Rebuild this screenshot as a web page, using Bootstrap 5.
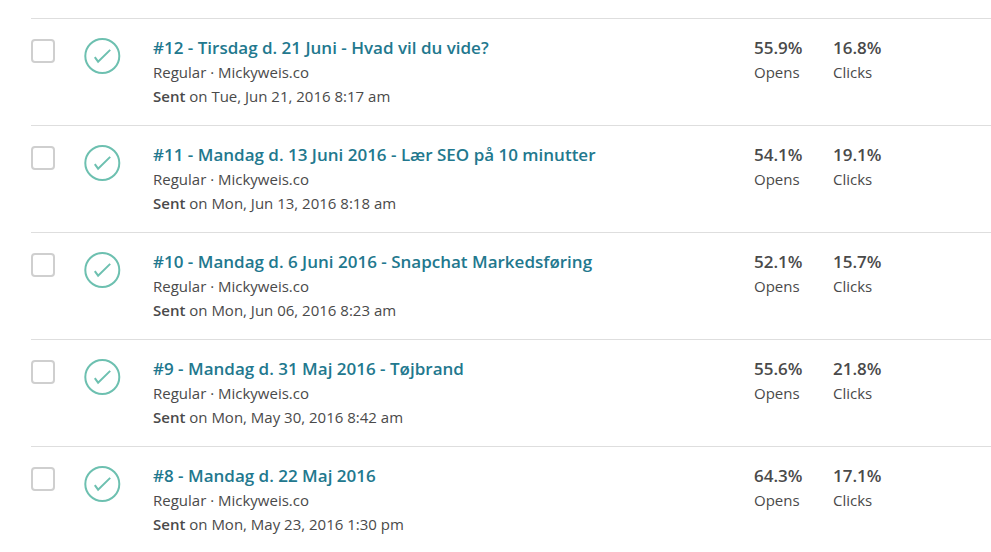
<!DOCTYPE html>
<html lang="da">
<head>
<meta charset="utf-8">
<meta name="viewport" content="width=device-width, initial-scale=1">
<title>Campaigns</title>
<link rel="stylesheet" href="https://cdn.jsdelivr.net/npm/bootstrap@5.3.0/dist/css/bootstrap.min.css">
<style>
body { font-family: "Open Sans", sans-serif; font-size: 15px; line-height: 24px; color: #4a4a4a; background: #fff; }
.campaign-list { padding: 18px 0 0 31px; }
.campaign { border-top: 1px solid #dedede; padding: 17px 0; }
.campaign .form-check-input { width: 24px; height: 24px; margin: 3px 28px 0 0; border: 2px solid #cfcfcf; border-radius: 4px; }
.status-icon { width: 38px; height: 38px; margin: 1px 32px 0 0; }
.campaign-title { font-size: 17px; font-weight: 600; color: #22788e; }
.campaign-title:hover { color: #174f5e; }
.campaign-text { font-size: 15px; }
.sent-label, .rate { font-weight: 600; }
.rate { font-size: 17px; }
.opens { width: 79px; }
.clicks { width: 158px; }
</style>
</head>
<body>
<svg class="d-none" xmlns="http://www.w3.org/2000/svg">
  <symbol id="sent" viewBox="0 0 38 38">
    <g fill="none" stroke="#6dc0b0" stroke-width="2"><circle cx="19.3" cy="19" r="17"/><path d="M11.8 20.2 15.1 24.7 27.2 12.9" stroke-linejoin="miter"/></g>
  </symbol>
</svg>
<main>
<ul class="campaign-list list-unstyled mb-0">
  <li class="campaign d-flex align-items-start">
    <input class="form-check-input flex-shrink-0" type="checkbox" aria-labelledby="c12">
    <svg class="status-icon flex-shrink-0" aria-hidden="true"><use href="#sent"/></svg>
    <div class="flex-grow-1">
      <div><a class="campaign-title text-decoration-none" id="c12" href="#">#12 - Tirsdag d. 21 Juni - Hvad vil du vide?</a></div>
      <div class="campaign-text">Regular · Mickyweis.co</div>
      <div class="campaign-text"><span class="sent-label">Sent</span> on Tue, Jun 21, 2016 8:17 am</div>
    </div>
    <div class="opens flex-shrink-0"><div class="rate">55.9%</div><div>Opens</div></div>
    <div class="clicks flex-shrink-0"><div class="rate">16.8%</div><div>Clicks</div></div>
  </li>
  <li class="campaign d-flex align-items-start">
    <input class="form-check-input flex-shrink-0" type="checkbox" aria-labelledby="c11">
    <svg class="status-icon flex-shrink-0" aria-hidden="true"><use href="#sent"/></svg>
    <div class="flex-grow-1">
      <div><a class="campaign-title text-decoration-none" id="c11" href="#">#11 - Mandag d. 13 Juni 2016 - Lær SEO på 10 minutter</a></div>
      <div class="campaign-text">Regular · Mickyweis.co</div>
      <div class="campaign-text"><span class="sent-label">Sent</span> on Mon, Jun 13, 2016 8:18 am</div>
    </div>
    <div class="opens flex-shrink-0"><div class="rate">54.1%</div><div>Opens</div></div>
    <div class="clicks flex-shrink-0"><div class="rate">19.1%</div><div>Clicks</div></div>
  </li>
  <li class="campaign d-flex align-items-start">
    <input class="form-check-input flex-shrink-0" type="checkbox" aria-labelledby="c10">
    <svg class="status-icon flex-shrink-0" aria-hidden="true"><use href="#sent"/></svg>
    <div class="flex-grow-1">
      <div><a class="campaign-title text-decoration-none" id="c10" href="#">#10 - Mandag d. 6 Juni 2016 - Snapchat Markedsføring</a></div>
      <div class="campaign-text">Regular · Mickyweis.co</div>
      <div class="campaign-text"><span class="sent-label">Sent</span> on Mon, Jun 06, 2016 8:23 am</div>
    </div>
    <div class="opens flex-shrink-0"><div class="rate">52.1%</div><div>Opens</div></div>
    <div class="clicks flex-shrink-0"><div class="rate">15.7%</div><div>Clicks</div></div>
  </li>
  <li class="campaign d-flex align-items-start">
    <input class="form-check-input flex-shrink-0" type="checkbox" aria-labelledby="c9">
    <svg class="status-icon flex-shrink-0" aria-hidden="true"><use href="#sent"/></svg>
    <div class="flex-grow-1">
      <div><a class="campaign-title text-decoration-none" id="c9" href="#">#9 - Mandag d. 31 Maj 2016 - Tøjbrand</a></div>
      <div class="campaign-text">Regular · Mickyweis.co</div>
      <div class="campaign-text"><span class="sent-label">Sent</span> on Mon, May 30, 2016 8:42 am</div>
    </div>
    <div class="opens flex-shrink-0"><div class="rate">55.6%</div><div>Opens</div></div>
    <div class="clicks flex-shrink-0"><div class="rate">21.8%</div><div>Clicks</div></div>
  </li>
  <li class="campaign d-flex align-items-start">
    <input class="form-check-input flex-shrink-0" type="checkbox" aria-labelledby="c8">
    <svg class="status-icon flex-shrink-0" aria-hidden="true"><use href="#sent"/></svg>
    <div class="flex-grow-1">
      <div><a class="campaign-title text-decoration-none" id="c8" href="#">#8 - Mandag d. 22 Maj 2016</a></div>
      <div class="campaign-text">Regular · Mickyweis.co</div>
      <div class="campaign-text"><span class="sent-label">Sent</span> on Mon, May 23, 2016 1:30 pm</div>
    </div>
    <div class="opens flex-shrink-0"><div class="rate">64.3%</div><div>Opens</div></div>
    <div class="clicks flex-shrink-0"><div class="rate">17.1%</div><div>Clicks</div></div>
  </li>
</ul>
</main>
<script src="https://cdn.jsdelivr.net/npm/bootstrap@5.3.0/dist/js/bootstrap.bundle.min.js"></script>
</body>
</html>
